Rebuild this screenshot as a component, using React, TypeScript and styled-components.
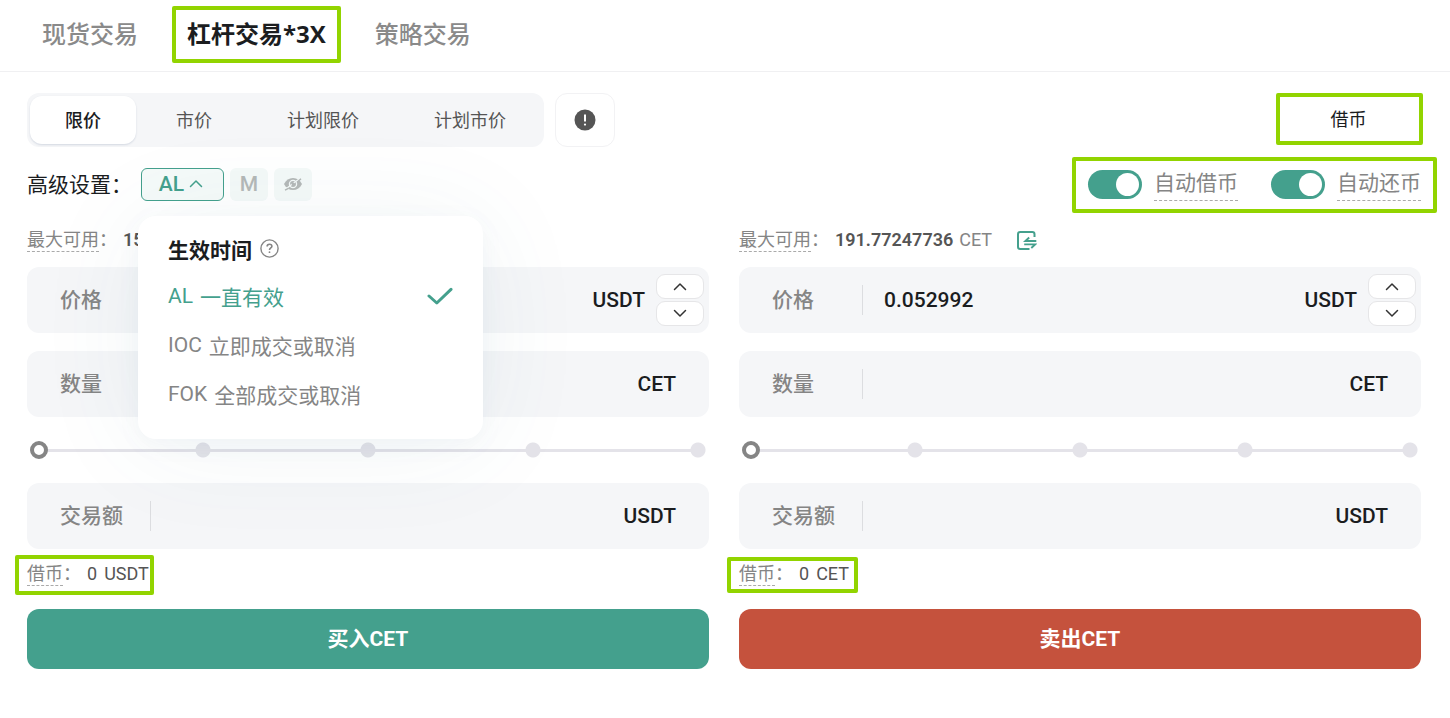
import React, { useState } from "react";
import styled, { createGlobalStyle, css } from "styled-components";

const color = {
  green: "#44a08d",
  red: "#c5523d",
  mark: "#92d400",
  ink: "#1b1d1f",
  body: "#555555",
  muted: "#858585",
  field: "#f5f6f8",
  line: "#e4e3e9",
};

const GlobalStyle = createGlobalStyle`
  *, *::before, *::after { box-sizing: border-box; }
  body {
    margin: 0;
    background: #ffffff;
    color: ${color.ink};
    font-family: Roboto, "Noto Sans CJK SC", sans-serif;
    font-size: 21px;
  }
  button, input { font: inherit; color: inherit; }
  button { margin: 0; padding: 0; border: 0; background: none; cursor: pointer; }
`;

/* Green marker drawn around the features being pointed out */
const Marked = styled.div<{ $inset: string }>`
  position: relative;
  display: flex;
  align-items: center;
  &::after {
    content: "";
    position: absolute;
    inset: ${(p) => p.$inset};
    border: 4px solid ${color.mark};
    border-radius: 2px;
    pointer-events: none;
  }
`;

const Nav = styled.nav`
  display: flex;
  gap: 20px;
  height: 72px;
  padding: 6px 28px 8px;
  border-bottom: 1px solid #f0f0f2;
`;

const NavTab = styled.button<{ $active?: boolean }>`
  padding: 0 14px 4px;
  font-size: 24px;
  font-weight: 500;
  color: #8a8a8a;
  ${(p) =>
    p.$active &&
    css`
      padding: 0 11px 4px;
      border: 4px solid ${color.mark};
      border-radius: 2px;
      font-family: "Open Sans", "Noto Sans CJK SC", sans-serif;
      font-weight: 700;
      color: ${color.ink};
    `}
`;

const Main = styled.main`
  padding: 21px 29px 49px 27px;
`;

const Bar = styled.div`
  display: flex;
  justify-content: space-between;
  align-items: center;
`;

const Group = styled.div<{ $gap: number }>`
  display: flex;
  align-items: center;
  gap: ${(p) => p.$gap}px;
`;

const Segments = styled.div`
  display: flex;
  gap: 5px;
  height: 54px;
  padding: 3px;
  border-radius: 12px;
  background: ${color.field};
`;

const Segment = styled.button<{ $active?: boolean }>`
  padding: 0 35px 3px;
  border-radius: 12px;
  font-size: 18px;
  color: ${color.body};
  ${(p) =>
    p.$active &&
    css`
      background: #ffffff;
      box-shadow: 0 1px 2px rgba(40, 60, 110, 0.16);
      font-weight: 500;
      color: ${color.ink};
    `}
`;

const NoticeButton = styled.button`
  display: grid;
  place-items: center;
  width: 60px;
  height: 54px;
  border: 1px solid #f2f2f4;
  border-radius: 12px;
`;

const BorrowButton = styled.button`
  width: 143px;
  height: 54px;
  padding: 0 2px 4px 0;
  border-radius: 12px;
  font-size: 18px;
`;

const Settings = styled(Bar)`
  height: 33px;
  margin-top: 21px;
`;

const SettingsLabel = styled.span`
  padding-bottom: 3px;
`;

const Anchor = styled.div`
  position: relative;
`;

const AlButton = styled.button`
  display: flex;
  justify-content: center;
  align-items: center;
  gap: 5px;
  width: 83px;
  height: 33px;
  padding: 0 3px 2px 0;
  border: 1px solid ${color.green};
  border-radius: 6px;
  background: #f5faf9;
  font-weight: 500;
  color: ${color.green};
`;

const ModeButton = styled.button`
  display: grid;
  place-items: center;
  width: 38px;
  height: 33px;
  padding-bottom: 2px;
  border-radius: 6px;
  background: #f4f9f8;
  font-weight: 500;
  color: #b4b8b7;
`;

const Menu = styled.div`
  position: absolute;
  z-index: 2;
  top: 48px;
  left: -3px;
  width: 345px;
  padding: 8px 30px 19px;
  border-radius: 18px;
  background: #ffffff;
  box-shadow: 0 6px 24px rgba(70, 110, 150, 0.05), 0 6px 110px rgba(60, 110, 130, 0.07);
`;

const MenuTitle = styled.h2`
  display: flex;
  align-items: center;
  gap: 8px;
  margin: 0;
  height: 49px;
  font-size: 21px;
  font-weight: 700;
`;

const Option = styled.button<{ $active?: boolean }>`
  display: flex;
  align-items: center;
  gap: 7px;
  width: 100%;
  height: 49px;
  padding-bottom: 4px;
  white-space: nowrap;
  color: ${(p) => (p.$active ? color.green : color.muted)};
  svg { margin-left: auto; }
`;

const SwitchLabel = styled.label`
  display: flex;
  align-items: center;
  gap: 12px;
  color: ${color.muted};
`;

const Switch = styled.input`
  appearance: none;
  display: flex;
  align-items: center;
  width: 54px;
  height: 29px;
  margin: 0;
  padding: 3px;
  border-radius: 15px;
  background: #cfd2d6;
  cursor: pointer;
  &::before {
    content: "";
    width: 23px;
    height: 23px;
    border-radius: 50%;
    background: #ffffff;
  }
  &:checked {
    justify-content: flex-end;
    background: ${color.green};
  }
`;

const Dashed = styled.span`
  border-bottom: 1px dashed #aaaaaa;
  line-height: 23px;
`;

const SwitchText = styled(Dashed)`
  padding-bottom: 2px;
  line-height: 30px;
`;

const Columns = styled.div`
  display: grid;
  grid-template-columns: 1fr 1fr;
  gap: 30px;
  margin-top: 27px;
`;

const Form = styled.form`
  display: flex;
  flex-direction: column;
  min-width: 0;
`;

const Info = styled.div`
  display: flex;
  align-items: center;
  height: 24px;
  font-size: 18px;
  line-height: 24px;
  color: ${color.muted};
  white-space: nowrap;
`;

const Amount = styled.span`
  margin: 0 6px;
  font-weight: 600;
  color: ${color.body};
`;

const TransferButton = styled.button`
  display: flex;
  margin-left: 25px;
  color: ${color.green};
`;

const Field = styled.label<{ $stepper?: boolean }>`
  display: flex;
  align-items: center;
  gap: 11px;
  height: 66px;
  padding: 0 ${(p) => (p.$stepper ? 5 : 33)}px 0 33px;
  border-radius: 12px;
  background: ${color.field};
  font-weight: 500;
`;

const FieldName = styled.span`
  width: 79px;
  padding-bottom: 4px;
  color: ${color.muted};
`;

const FieldInput = styled.input`
  flex: 1;
  min-width: 0;
  height: 30px;
  padding: 0 21px;
  border: 0;
  border-left: 1px solid #dcdde0;
  outline: 0;
  background: none;
`;

const Stepper = styled.span`
  display: flex;
  flex-direction: column;
  gap: 2px;
`;

const StepButton = styled.button`
  display: grid;
  place-items: center;
  width: 48px;
  height: 25px;
  border: 1px solid #e6e6e8;
  border-radius: 9px;
  background: #ffffff;
  color: #333333;
`;

const dot = "radial-gradient(circle, #e4e3e9 7px, transparent 8px)";

const Slider = styled.input`
  appearance: none;
  height: 18px;
  margin: 24px 3px;
  background:
    ${dot} 25% 50% / 16px 16px no-repeat,
    ${dot} 50% 50% / 16px 16px no-repeat,
    ${dot} 75% 50% / 16px 16px no-repeat,
    ${dot} 100% 50% / 16px 16px no-repeat,
    linear-gradient(${color.line}, ${color.line}) 50% 50% / calc(100% - 18px) 3px no-repeat;
  &::-webkit-slider-thumb {
    appearance: none;
    width: 18px;
    height: 18px;
    border: 4px solid ${color.muted};
    border-radius: 50%;
    background: #ffffff;
  }
`;

const Stack = styled.div`
  display: flex;
  flex-direction: column;
  gap: 18px;
  margin-top: 15px;
`;

const Borrowed = styled(Info)`
  margin: 13px 0 23px;
`;

const Plain = styled.span`
  display: flex;
  gap: 7px;
  margin-left: 6px;
  color: ${color.body};
`;

const Submit = styled.button<{ $sell?: boolean }>`
  height: 60px;
  padding-bottom: 4px;
  border-radius: 12px;
  background: ${(p) => (p.$sell ? color.red : color.green)};
  font-weight: 700;
  color: #ffffff;
`;

const Chevron = ({ down }: { down?: boolean }) => (
  <svg width="14" height="9" viewBox="0 0 14 9" fill="none" stroke="currentColor" strokeWidth="1.5" strokeLinecap="round" strokeLinejoin="round">
    <path d={down ? "M1.5 1.5 7 7 12.5 1.5" : "M1.5 7.5 7 2 12.5 7.5"} />
  </svg>
);

const NoticeIcon = () => (
  <svg width="22" height="22" viewBox="0 0 22 22">
    <circle cx="11" cy="11" r="10.5" fill="#555555" />
    <path d="M11 5.5v7" stroke="#fff" strokeWidth="2" />
    <circle cx="11" cy="15.6" r="1.1" fill="#fff" />
  </svg>
);

const HelpIcon = () => (
  <svg width="19" height="19" viewBox="0 0 19 19" fill="none" stroke="#858585" strokeWidth="1.4">
    <circle cx="9.5" cy="9.5" r="8.6" />
    <path d="M7.1 7.6C7.1 6 8.1 5.2 9.5 5.2s2.4.8 2.4 2.1c0 1.6-2.4 1.7-2.4 3.6" strokeWidth="1.6" />
    <circle cx="9.5" cy="13.2" r=".9" fill="#858585" stroke="none" />
  </svg>
);

const CheckIcon = () => (
  <svg width="26" height="18" viewBox="0 0 26 18" fill="none" stroke="currentColor" strokeWidth="3" strokeLinecap="round" strokeLinejoin="round">
    <path d="M2 9 9.8 16 24 2.4" />
  </svg>
);

const HiddenIcon = () => (
  <svg width="20" height="16" viewBox="0 0 20 16">
    <path d="M1 8C3 4 6 2 10 2s7 2 9 6c-2 4-5 6-9 6s-7-2-9-6Z" fill="#b4b8b7" />
    <circle cx="10" cy="8" r="3.6" fill="none" stroke="#f4f9f8" strokeWidth="1.3" />
    <path d="M1 12.6 4.6 11.6 14.6 4 19.4 2.4" fill="none" stroke="#f4f9f8" strokeWidth="1.2" />
    <path d="M2 14.2 5.5 12.4M15.5 5 18 2.8" fill="none" stroke="#b4b8b7" strokeWidth="1.5" />
    <circle cx="10" cy="8" r="1.4" fill="#b4b8b7" />
  </svg>
);

const TransferIcon = () => (
  <svg width="20" height="19" viewBox="0 0 20 19" fill="none" stroke="currentColor" strokeWidth="2">
    <path d="M17.5 6V3.2Q17.5 1 15.3 1H3.2Q1 1 1 3.2v12.6Q1 18 3.2 18H12.5" />
    <path d="M19.3 10H8.4l3.8-3.5M7.2 13.4h11l-3.9 3.6" strokeWidth="1.9" />
  </svg>
);

type SideProps = {
  available: string;
  coin: string;
  price: string;
  inset: string;
  action: string;
  sell?: boolean;
};

function OrderForm({ available, coin, price, inset, action, sell }: SideProps) {
  const [value, setValue] = useState(price);
  const step = (delta: number) => setValue((Number(value) + delta).toFixed(6));
  return (
    <Form onSubmit={(e) => e.preventDefault()}>
      <Info>
        <Dashed>最大可用</Dashed>：<Amount>{available}</Amount>
        {coin}
        <TransferButton type="button" aria-label="划转">
          <TransferIcon />
        </TransferButton>
      </Info>
      <Stack>
        <Field $stepper>
          <FieldName>价格</FieldName>
          <FieldInput value={value} onChange={(e) => setValue(e.target.value)} />
          USDT
          <Stepper>
            <StepButton type="button" aria-label="加" onClick={() => step(0.000001)}>
              <Chevron />
            </StepButton>
            <StepButton type="button" aria-label="减" onClick={() => step(-0.000001)}>
              <Chevron down />
            </StepButton>
          </Stepper>
        </Field>
        <Field>
          <FieldName>数量</FieldName>
          <FieldInput />
          CET
        </Field>
      </Stack>
      <Slider type="range" min={0} max={100} step={1} defaultValue={0} aria-label="仓位比例" />
      <Field>
        <FieldName>交易额</FieldName>
        <FieldInput />
        USDT
      </Field>
      <Borrowed>
        <Marked $inset={inset}>
          <Dashed>借币</Dashed>：
          <Plain>
            <span>0</span>
            <span>{coin}</span>
          </Plain>
        </Marked>
      </Borrowed>
      <Submit type="submit" $sell={sell}>
        {action}
      </Submit>
    </Form>
  );
}

const orderTypes = ["限价", "市价", "计划限价", "计划市价"];
const terms = [
  { code: "AL", name: "一直有效" },
  { code: "IOC", name: "立即成交或取消" },
  { code: "FOK", name: "全部成交或取消" },
];

export default function App() {
  const [type, setType] = useState(0);
  const [term, setTerm] = useState(0);
  const [open, setOpen] = useState(true);
  return (
    <>
      <GlobalStyle />
      <Nav>
        <NavTab>现货交易</NavTab>
        <NavTab $active>杠杆交易*3X</NavTab>
        <NavTab>策略交易</NavTab>
      </Nav>
      <Main>
        <Bar>
          <Group $gap={11}>
            <Segments>
              {orderTypes.map((name, i) => (
                <Segment key={name} $active={i === type} onClick={() => setType(i)}>
                  {name}
                </Segment>
              ))}
            </Segments>
            <NoticeButton aria-label="说明">
              <NoticeIcon />
            </NoticeButton>
          </Group>
          <Marked $inset="0 -2px 2px -2px">
            <BorrowButton>借币</BorrowButton>
          </Marked>
        </Bar>
        <Settings>
          <Group $gap={9}>
            <SettingsLabel>高级设置：</SettingsLabel>
            <Group $gap={6}>
              <Anchor>
                <AlButton aria-expanded={open} onClick={() => setOpen(!open)}>
                  AL
                  <Chevron />
                </AlButton>
                {open && (
                  <Menu>
                    <MenuTitle>
                      生效时间
                      <HelpIcon />
                    </MenuTitle>
                    {terms.map(({ code, name }, i) => (
                      <Option key={code} $active={i === term} onClick={() => setTerm(i)}>
                        <span>{code}</span>
                        <span>{name}</span>
                        {i === term && <CheckIcon />}
                      </Option>
                    ))}
                  </Menu>
                )}
              </Anchor>
              <ModeButton>M</ModeButton>
              <ModeButton aria-label="隐藏委托">
                <HiddenIcon />
              </ModeButton>
            </Group>
          </Group>
          <Marked $inset="-11px -16px -12px">
            <Group $gap={33}>
              <SwitchLabel>
                <Switch type="checkbox" defaultChecked />
                <SwitchText>自动借币</SwitchText>
              </SwitchLabel>
              <SwitchLabel>
                <Switch type="checkbox" defaultChecked />
                <SwitchText>自动还币</SwitchText>
              </SwitchLabel>
            </Group>
          </Marked>
        </Settings>
        <Columns>
          <OrderForm available="15" coin="USDT" price="0.052992" inset="-7px -5px -9px -12px" action="买入CET" />
          <OrderForm available="191.77247736" coin="CET" price="0.052992" inset="-5px -9px -7px -12px" action="卖出CET" sell />
        </Columns>
      </Main>
    </>
  );
}
